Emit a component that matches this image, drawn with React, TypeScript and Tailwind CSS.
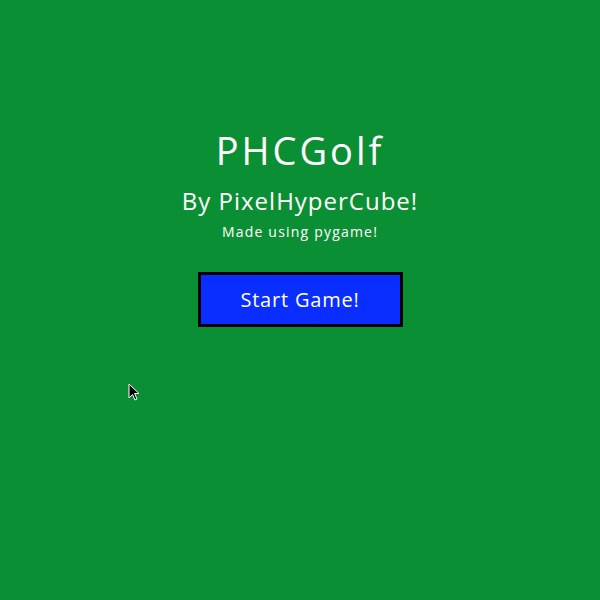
import React from "react";

export default function App() {
  return (
    <div
      className="relative w-[600px] h-[600px] bg-[#0b8f34] flex flex-col items-center text-white overflow-hidden"
      style={{ fontFamily: '"Open Sans", "Liberation Sans", sans-serif' }}
    >
      <h1 className="mt-[126px] text-[38px] leading-[48px] tracking-[3px] font-normal">PHCGolf</h1>
      <p className="mt-[12px] text-[24px] leading-[30px] tracking-[1px]">By PixelHyperCube!</p>
      <p className="mt-[6px] text-[14px] leading-[20px] tracking-[1.2px]">Made using pygame!</p>
      <button className="mt-[30px] w-[205px] h-[55px] border-[3px] border-black bg-[#0a2eff] text-[20px] tracking-[0.8px] text-white flex items-center justify-center">
        Start Game!
      </button>
      <svg
        className="absolute left-[128px] top-[383px]"
        width="12"
        height="19"
        viewBox="0 0 12 19"
      >
        <path d="M1 1 L1 15 L4.5 11.5 L7 17 L9 16 L6.5 10.5 L11 10.5 Z" fill="#000" stroke="#fff" strokeWidth="1" />
      </svg>
    </div>
  );
}
